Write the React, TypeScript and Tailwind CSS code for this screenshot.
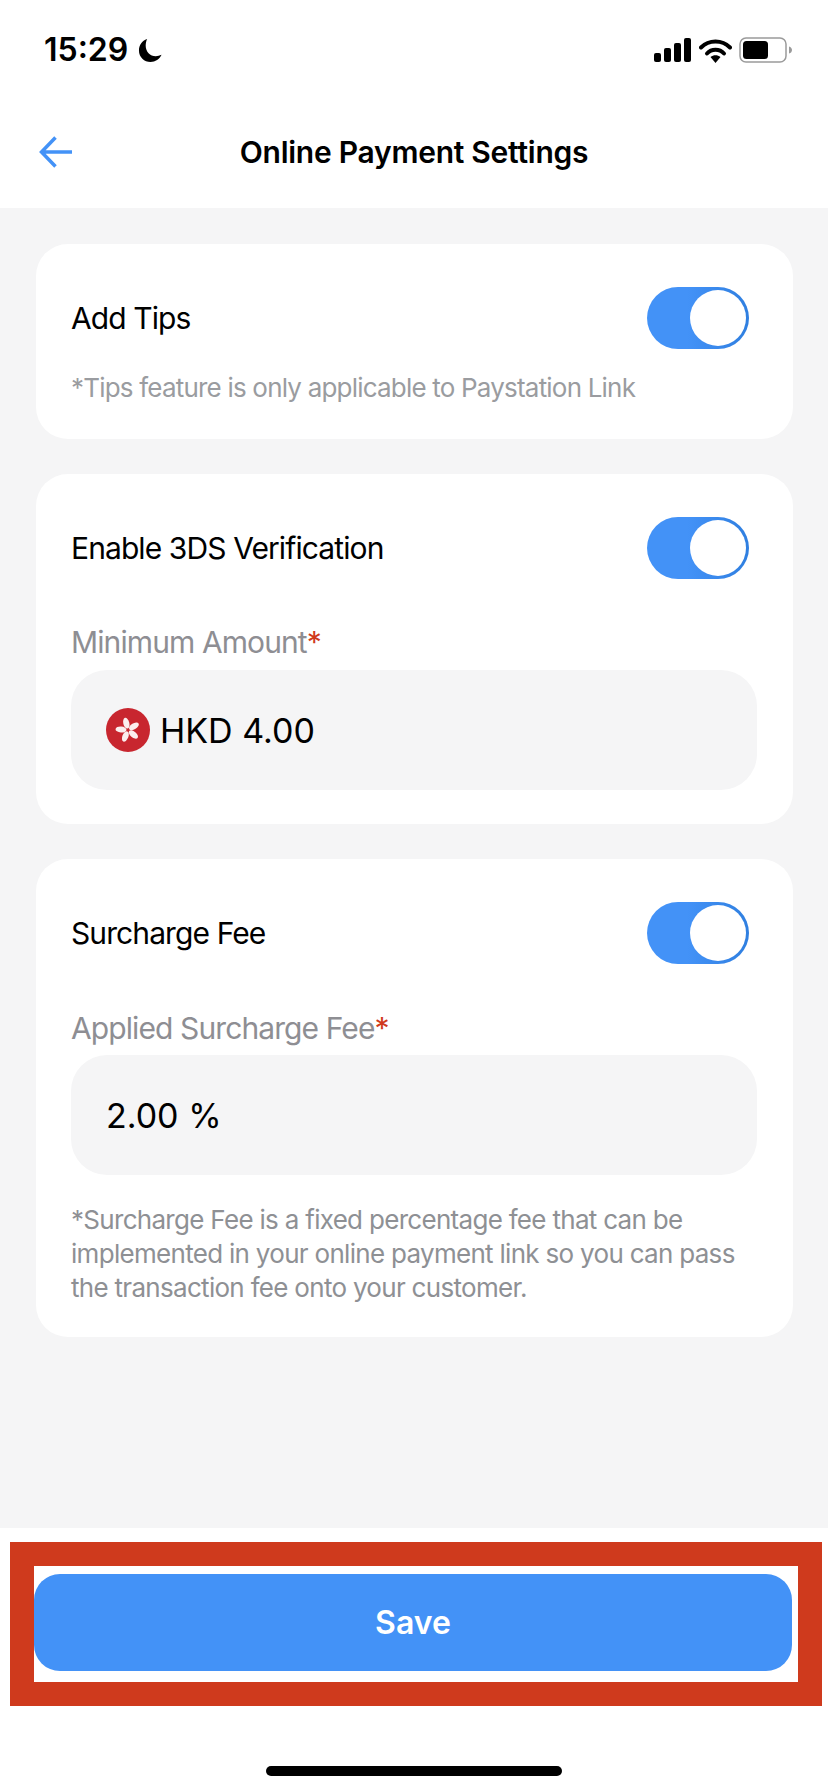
import React from 'react';

const Toggle = () => (
  <div className="flex justify-end w-[102px] h-[62px] p-[3px] rounded-full bg-gradient-to-r from-[#4392f7] from-40% to-[#2f7fe0] shrink-0">
    <div className="w-[56px] h-[56px] rounded-full bg-white" />
  </div>
);

const ToggleRow = ({ label }: { label: string }) => (
  <div className="flex items-center justify-between pr-[8px] h-[62px]">
    <span className="text-[30px] leading-[36px] tracking-[-0.9px] text-black">{label}</span>
    <Toggle />
  </div>
);

const Label = ({ text, className }: { text: string; className: string }) => (
  <div className={`text-[30px] leading-[36px] tracking-[-0.9px] text-[#8e8e93] ${className}`}>
    {text}
    <span className="text-[#d0391c]">*</span>
  </div>
);

const HkFlag = () => (
  <svg width="44" height="44" viewBox="0 0 44 44" className="shrink-0">
    <circle cx="22" cy="22" r="22" fill="#c8262f" />
    <g fill="#fbeeee">
      <ellipse cx="22" cy="15" rx="3" ry="5.5" transform="rotate(-14 22 22)" />
      <ellipse cx="22" cy="15" rx="3" ry="5.5" transform="rotate(58 22 22)" />
      <ellipse cx="22" cy="15" rx="3" ry="5.5" transform="rotate(130 22 22)" />
      <ellipse cx="22" cy="15" rx="3" ry="5.5" transform="rotate(202 22 22)" />
      <ellipse cx="22" cy="15" rx="3" ry="5.5" transform="rotate(274 22 22)" />
    </g>
  </svg>
);

const App: React.FC = () => {
  return (
    <div className="w-[828px] h-[1792px] flex flex-col bg-white font-['Inter',sans-serif] overflow-hidden">
      {/* status bar */}
      <div className="h-[100px] flex items-center justify-between pl-[44px] pr-[35px] shrink-0">
        <div className="flex items-center gap-[10px]">
          <span className="text-[32px] font-semibold text-black leading-none">15:29</span>
          <svg width="25" height="25" viewBox="0 0 26 26">
            <path d="M9.5 1C4 3 1 7.5 1 13c0 7 5.5 12 12 12 5 0 9.5-3 11.5-7.5C22.500 18.500 20.500 19 18.500 19 12.500 19 8 14 8 8c0-2.500.5-5 1.500-7z" fill="#000" />
          </svg>
        </div>
        <div className="flex items-center gap-[7px]">
          <svg width="38" height="24" viewBox="0 0 38 24" fill="#000">
            <rect x="0" y="15" width="7" height="9" rx="2" />
            <rect x="10" y="10" width="7" height="14" rx="2" />
            <rect x="20" y="5" width="7" height="19" rx="2" />
            <rect x="30" y="0" width="7" height="24" rx="2" />
          </svg>
          <svg width="33" height="25" viewBox="0 0 33 25">
            <path d="M2 9.500C10 1.500 23 1.500 31 9.500" fill="none" stroke="#000" strokeWidth="4" strokeLinecap="round" />
            <path d="M8 15.500C12.500 10.500 20.500 10.500 25 15.500" fill="none" stroke="#000" strokeWidth="4" strokeLinecap="round" />
            <path d="M16.500 25l-5-6c3-2.500 7-2.500 10 0z" fill="#000" />
          </svg>
          <svg width="54" height="26" viewBox="0 0 54 26">
            <rect x="1" y="1" width="46" height="24" rx="6" fill="none" stroke="#9a9a9a" strokeWidth="1.500" />
            <rect x="4" y="4" width="25" height="18" rx="3.500" fill="#000" />
            <path d="M50 9.500c2 .5 3 2 3 3.500s-1 3-3 3.500z" fill="#9a9a9a" />
          </svg>
        </div>
      </div>

      {/* nav bar */}
      <div className="relative h-[108px] pb-[4px] flex items-center justify-center shrink-0">
        <svg width="34" height="34" viewBox="0 0 34 34" className="absolute left-[39px] top-[35px]">
          <path d="M33 17H3M16.500 2.500L2.500 17l14 14.500" fill="none" stroke="#4392f7" strokeWidth="3.500" />
        </svg>
        <span className="text-[30px] font-semibold tracking-[-0.26px] text-black">Online Payment Settings</span>
      </div>

      {/* settings */}
      <div className="flex-1 bg-[#f5f5f6] pl-[36px] pr-[35px] pt-[36px] flex flex-col gap-[35px]">
        <div className="bg-white rounded-[32px] h-[195px] pt-[43px] pl-[35px] pr-[36px]">
          <ToggleRow label="Add Tips" />
          <p className="mt-[22px] text-[26px] leading-[34px] tracking-[-0.8px] text-[#9a9ca0] whitespace-nowrap">*Tips feature is only applicable to Paystation Link</p>
        </div>

        <div className="bg-white rounded-[32px] h-[350px] pt-[43px] pl-[35px] pr-[36px]">
          <ToggleRow label="Enable 3DS Verification" />
          <Label text="Minimum Amount" className="mt-[45px]" />
          <div className="mt-[10px] h-[120px] rounded-[36px] bg-[#f5f5f6] flex items-center pl-[35px] gap-[10px]">
            <HkFlag />
            <span className="text-[34px] text-black">HKD 4.00</span>
          </div>
        </div>

        <div className="bg-white rounded-[32px] h-[478px] pt-[43px] pl-[35px] pr-[36px]">
          <ToggleRow label="Surcharge Fee" />
          <Label text="Applied Surcharge Fee" className="mt-[46px]" />
          <div className="mt-[9px] h-[120px] rounded-[36px] bg-[#f5f5f6] flex items-center pl-[35px]">
            <span className="text-[34px] text-black">2.00 %</span>
          </div>
          <p className="mt-[28px] text-[26px] leading-[34px] tracking-[-0.7px] text-[#8e9094] whitespace-nowrap">
            *Surcharge Fee is a fixed percentage fee that can be
            <br />
            implemented in your online payment link so you can pass
            <br />
            the transaction fee onto your customer.
          </p>
        </div>
      </div>

      {/* save */}
      <div className="h-[264px] shrink-0 flex flex-col items-start pt-[14px] pl-[10px]">
        <div className="w-[812px] h-[164px] border-[24px] border-[#cf3a1d] pt-[8px] pr-[5px]">
          <button className="w-[758px] h-[97px] rounded-[26px] bg-[#4392f7] text-white text-[32px] font-semibold">Save</button>
        </div>
        <div className="mt-[60px] ml-[256px] w-[296px] h-[10px] rounded-full bg-black" />
      </div>
    </div>
  );
};

export default App;
